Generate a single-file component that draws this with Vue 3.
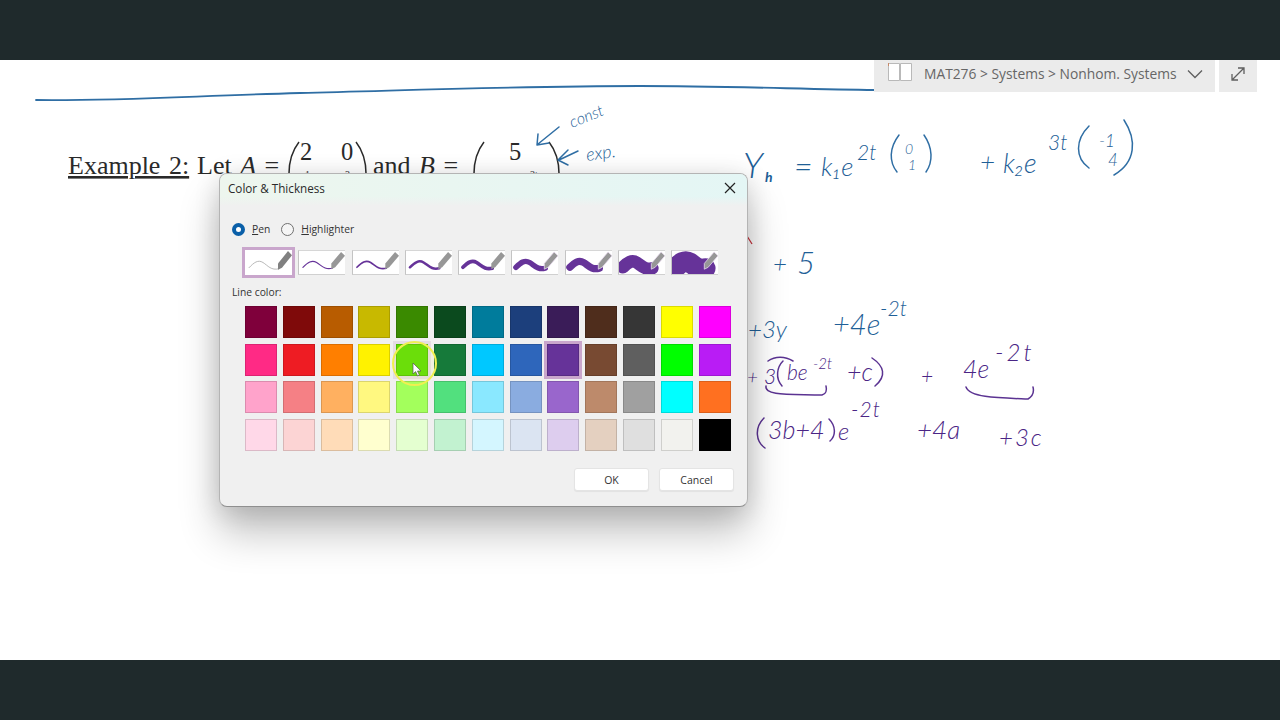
<template>
  <div class="screen">
    <div class="letterbox"></div>

    <main class="page">
      <svg class="ink" viewBox="0 60 1280 600" width="1280" height="600">
        <!-- printed problem statement -->
        <g class="print">
          <text x="68" y="174" text-decoration="underline">Example 2:</text>
          <text x="197" y="174">Let <tspan font-style="italic">A</tspan> =</text>
          <text class="print__cell" x="300" y="160">2</text>
          <text class="print__cell" x="341" y="160">0</text>
          <!-- second matrix row is almost all behind the dialog, only its tips show -->
          <text class="print__tip" x="305" y="178">1</text>
          <text class="print__tip" x="345" y="178">3</text>
          <text x="373" y="174">and <tspan font-style="italic">B</tspan> =</text>
          <text class="print__cell" x="509" y="160">5</text>
          <text class="print__tip" x="530" y="178">2t</text>
        </g>
        <path class="bracket" d="M299 142 Q288 156 289 178 M356 142 Q367 156 366 178 M484 142 Q473 156 474 178 M549 142 Q560 156 559 178" />

        <!-- long rule across the page -->
        <path class="stroke blue wide" d="M36 100 C120 101 190 96 300 93 C420 90 520 86 640 86 C720 86 800 89 875 90" />

        <!-- notes on the printed part -->
        <g class="hand blue">
          <text transform="translate(572 128) rotate(-22)" font-size="16">const</text>
          <text transform="translate(587 161) rotate(-8)" font-size="18">exp.</text>

          <text x="743" y="178" font-size="36">Y</text>
          <text x="765" y="182" font-size="14" font-weight="700">h</text>
          <text x="794" y="178" font-size="32">=</text>
          <text x="821" y="176" font-size="26">k₁e</text>
          <text x="857" y="160" font-size="21">2t</text>
          <text x="905" y="154" font-size="14">0</text>
          <text x="908" y="170" font-size="14">1</text>
          <text x="980" y="171" font-size="26">+</text>
          <text x="1003" y="173" font-size="27">k₂e</text>
          <text x="1048" y="150" font-size="21">3t</text>
          <text x="1099" y="147" font-size="17">-1</text>
          <text x="1108" y="166" font-size="17">4</text>
          <text x="773" y="272" font-size="24">+</text>
          <text x="797" y="274" font-size="31">5</text>
          <text x="748" y="338" font-size="24">+3y</text>
          <text x="833" y="335" font-size="29">+4e</text>
          <text x="880" y="316" font-size="21">-2t</text>
        </g>
        <g class="stroke blue">
          <path d="M559 127 L538 144 M538 134 L537 145 L549 143" />
          <path d="M578 151 L559 160 M568 150 L558 160 L568 165" />
          <path d="M899 135 C889 148 889 162 897 172 M924 135 C933 148 933 162 926 172" />
          <path d="M1089 126 C1075 140 1075 158 1089 168 M1124 120 C1137 140 1136 162 1114 175" />
        </g>
        <path class="red" d="M747 236 L752 244" />

        <!-- worked lines in purple -->
        <g class="hand purple">
          <text x="747" y="384" font-size="19">+</text>
          <text x="764" y="384" font-size="21">3</text>
          <text x="787" y="380" font-size="21">be</text>
          <text x="813" y="369" font-size="15">-2t</text>
          <text x="847" y="381" font-size="25">+c</text>
          <text x="921" y="384" font-size="21">+</text>
          <text x="963" y="378" font-size="25">4e</text>
          <text x="995" y="361" font-size="24" letter-spacing="3">-2t</text>
          <text x="768" y="439" font-size="25">3b+4</text>
          <text x="838" y="440" font-size="24">e</text>
          <text x="851" y="417" font-size="21" letter-spacing="1">-2t</text>
          <text x="917" y="439" font-size="26">+4a</text>
          <text x="999" y="446" font-size="24" letter-spacing="2">+3c</text>
        </g>
        <g class="stroke purple">
          <path d="M783 361 C777 367 775 378 782 386 M872 358 C884 366 887 376 875 386" />
          <path d="M768 361 C775 356 785 356 793 361" />
          <path d="M766 386 C764 396 790 394 822 395 C826 394 827 390 826 386" />
          <path d="M966 387 C970 398 1000 398 1028 399 C1033 396 1034 391 1033 387" />
          <path d="M764 418 C754 428 756 442 765 448 M829 419 C836 426 836 436 830 441" />
        </g>
      </svg>

      <nav class="notebook-bar">
        <div class="crumbs">
          <svg class="book" viewBox="0 0 26 20" width="26" height="20">
            <path d="M1.5 1.5 H12.5 V18.5 H1.5 Z" fill="#fff" stroke="#b9b9b9" />
            <path d="M13.5 1.5 H24.5 V18.5 H13.5 Z" fill="#fff" stroke="#b9b9b9" />
            <path d="M1.5 1 V4" stroke="#c98b6a" />
          </svg>
          <span class="crumbs__text">MAT276 &gt; Systems &gt; Nonhom. Systems</span>
          <svg viewBox="0 0 16 10" width="16" height="10">
            <path d="M1 1.5 L8 8.5 L15 1.5" fill="none" stroke="#5f5f5f" stroke-width="1.3" />
          </svg>
        </div>
        <button class="expand">
          <svg viewBox="0 0 16 16" width="16" height="16">
            <path d="M2 14 L14 2 M8 2 H14 V8 M2 8 V14 H8" fill="none" stroke="#5f5f5f" stroke-width="1.3" />
          </svg>
        </button>
      </nav>

      <section class="dialog">
        <header class="dialog__header">
          <h2 class="dialog__title">Color &amp; Thickness</h2>
          <svg class="dialog__close" viewBox="0 0 12 12" width="12" height="12">
            <path d="M1 1 L11 11 M11 1 L1 11" stroke="#222" stroke-width="1.2" />
          </svg>
        </header>

        <div class="dialog__body">
          <div class="modes">
            <span class="radio radio--on"></span>
            <span class="modes__label"><u>P</u>en</span>
            <span class="radio"></span>
            <span class="modes__label"><u>H</u>ighlighter</span>
          </div>

          <div class="thickness">
            <div
              v-for="(w, i) in widths"
              :key="i"
              class="thumb"
              :class="{ 'thumb--selected': i === 0 }"
            >
              <svg viewBox="0 0 47 24" width="100%" height="100%" preserveAspectRatio="none">
                <path
                  d="M4 17 C9 12 13 9 18 12 S26 20 34 18"
                  fill="none"
                  stroke-linecap="round"
                  :stroke="i === 0 ? '#a9a9a9' : '#663399'"
                  :stroke-width="w"
                />
                <path
                  d="M43 1 L47 5 L37 17 L33 19 L33 13 Z"
                  :fill="i === 0 ? '#808080' : '#979797'"
                  :stroke="i > 4 ? '#e9dcf0' : 'none'"
                  stroke-width="0.8"
                />
              </svg>
            </div>
          </div>

          <div class="section-label">Line color:</div>

          <div class="palette">
            <div
              v-for="(c, i) in colors"
              :key="i"
              class="swatch"
              :class="{ 'swatch--selected': c === selected, 'swatch--hover': c === hovered }"
              :style="{ background: c }"
            >
              <template v-if="c === hovered">
                <span class="pointer-ring"></span>
                <svg class="pointer" viewBox="0 0 10 15" width="10" height="15">
                  <path d="M1 1 V12 L3.6 9.6 L5.6 14 L7.4 13 L5.5 9 H9 Z" fill="#fff" stroke="#555" stroke-width="0.7" />
                </svg>
              </template>
            </div>
          </div>

          <footer class="actions">
            <button class="btn">OK</button>
            <button class="btn">Cancel</button>
          </footer>
        </div>
      </section>
    </main>

    <div class="letterbox"></div>
  </div>
</template>

<script setup>
const widths = [0.8, 1.2, 1.7, 2.6, 3.8, 5.6, 7.5, 13, 21]

const selected = '#663399'
const hovered = '#5cdc00'

const colors = [
  '#7f003b', '#7f0a0a', '#b85c00', '#c8b900', '#3a8a00', '#0b4a1e', '#007c9c', '#1c3f7c', '#3a1c58', '#4f2d1c', '#363636', '#ffff00', '#ff00ff',
  '#ff2a85', '#ee1c23', '#ff7f00', '#fff200', '#5cdc00', '#167a3a', '#00c8ff', '#2e66bb', '#663399', '#784a32', '#5f5f5f', '#00ff00', '#b91cf5',
  '#ffa3cb', '#f58085', '#ffb060', '#fff880', '#a3ff5c', '#52e07e', '#8ae8ff', '#8aace0', '#9966cc', '#bd8a6b', '#a0a0a0', '#00ffff', '#ff7020',
  '#ffd8e8', '#fcd4d4', '#ffdcb8', '#ffffcf', '#e4ffd0', '#c2f2d0', '#d4f6ff', '#dbe4f2', '#ddcdee', '#e4d0c0', '#dfdfdf', '#f2f2ee', '#000000'
]
</script>

<style>
html,
body {
  margin: 0;
  background: #fff;
}
</style>

<style scoped>
.screen {
  width: 1280px;
  height: 720px;
  display: flex;
  flex-direction: column;
  overflow: hidden;
  font-family: "Open Sans", "Noto Sans", sans-serif;
}

.letterbox {
  height: 60px;
  flex: none;
  background: #1f2a2c;
}

.page {
  position: relative;
  flex: 1;
  background: #fff;
  overflow: hidden;
}

/* Ink and print sit on a free canvas, in screen coordinates */
.ink {
  position: absolute;
  inset: 0;
}

.print {
  font-family: "Liberation Serif", serif;
  font-size: 26px;
  word-spacing: 2px;
  fill: #2a2a2a;
}

.print__cell {
  font-size: 24.5px;
}

.print__tip {
  font-size: 10px;
}

.bracket {
  fill: none;
  stroke: #2a2a2a;
  stroke-width: 1.5;
}

.hand {
  font-family: Lato, "Open Sans", sans-serif;
  font-weight: 300;
  font-style: italic;
}

.hand.blue {
  fill: #1f5f97;
}

.hand.purple {
  fill: #4a2585;
}

.stroke {
  fill: none;
  stroke-width: 1.5;
  stroke-linecap: round;
  stroke-linejoin: round;
}

.stroke.blue {
  stroke: #2f6ea4;
}

.stroke.purple {
  stroke: #5b3392;
}

.stroke.wide {
  stroke-width: 1.8;
}

.red {
  stroke: #c8303a;
  stroke-width: 1.3;
  fill: none;
}

/* OneNote bar, top right */
.notebook-bar {
  position: absolute;
  top: 0;
  right: 23px;
  display: flex;
  gap: 4px;
}

.crumbs {
  width: 341px;
  height: 32px;
  box-sizing: border-box;
  padding: 0 12px 5px 13px;
  display: flex;
  align-items: center;
  background: #ebebeb;
}

.book {
  margin-right: 11px;
  margin-top: -4px;
}

.crumbs__text {
  flex: 1;
  font-size: 13.8px;
  color: #666;
  white-space: nowrap;
}

.expand {
  width: 38px;
  height: 32px;
  padding: 0 0 5px;
  border: 0;
  background: #ebebeb;
  display: flex;
  align-items: center;
  justify-content: center;
}

/* Dialog floats over the page like a desktop window */
.dialog {
  position: absolute;
  left: 219px;
  top: 113px;
  width: 529px;
  height: 334px;
  box-sizing: border-box;
  display: flex;
  flex-direction: column;
  background: #f0f0f0;
  border: 1px solid #b4b4b4;
  border-bottom-color: #8f8f8f;
  border-radius: 8px;
  box-shadow:
    0 26px 40px rgba(0, 0, 0, 0.24),
    0 4px 26px rgba(0, 0, 0, 0.14);
}

.dialog__header {
  height: 32px;
  flex: none;
  box-sizing: border-box;
  padding: 0 11px 5px 8px;
  display: flex;
  align-items: center;
  justify-content: space-between;
  border-radius: 7px 7px 0 0;
  background:
    linear-gradient(to bottom, rgba(240, 240, 240, 0) 70%, #f0f0f0),
    linear-gradient(to right, #edf6ee, #e4f6f5);
}

.dialog__title {
  margin: 0;
  font-size: 11.7px;
  font-weight: 400;
  color: #2a2a2a;
}

.dialog__body {
  flex: 1;
  min-height: 0;
  display: flex;
  flex-direction: column;
  padding: 16px 13px 15px 12px;
}

.modes {
  display: flex;
  align-items: center;
  height: 14px;
}

.radio {
  width: 13px;
  height: 13px;
  box-sizing: border-box;
  border-radius: 50%;
  border: 1px solid #707070;
  background: #f5f5f5;
}

.radio--on {
  border: 4px solid #0a5fa8;
  background: #fff;
}

.modes__label {
  margin-left: 7px;
  margin-right: 11px;
  font-size: 10.3px;
  color: #333;
}

.thickness {
  margin: 14px 0 0 13px;
  display: flex;
  gap: 6.3px;
}

.thumb {
  width: 47px;
  height: 25px;
  box-sizing: border-box;
  overflow: hidden;
  background: #fff;
  border-left: 1px solid #c4c4c4;
  border-top: 1px solid #d6d6d6;
  border-bottom: 1px solid #d0d0d0;
}

.thumb--selected {
  border: 0;
  outline: 3px solid #c9a6cc;
  outline-offset: 0;
}

.section-label {
  margin-top: 10px;
  font-size: 10.3px;
  color: #333;
  line-height: 14px;
}

.palette {
  margin: 7px 0 0 13px;
  display: grid;
  grid-template-columns: repeat(13, 32px);
  grid-auto-rows: 32px;
  column-gap: 5.8px;
  row-gap: 5.7px;
}

.swatch {
  position: relative;
  box-sizing: border-box;
  border: 1px solid rgba(0, 0, 0, 0.14);
}

.swatch--selected {
  box-shadow: 0 0 0 3px #c9a6cc;
}

.swatch--hover {
  z-index: 1;
  box-shadow: 0 0 0 3px #e4dde4;
}

.pointer-ring {
  position: absolute;
  left: -5px;
  top: -4px;
  width: 45px;
  height: 45px;
  box-sizing: border-box;
  border-radius: 50%;
  border: 2.5px solid #f0f050;
  background: rgba(250, 250, 100, 0.1);
}

.pointer {
  position: absolute;
  left: 15px;
  top: 17px;
}

.actions {
  margin-top: auto;
  display: flex;
  justify-content: flex-end;
  gap: 10px;
}

.btn {
  width: 75px;
  height: 23px;
  padding: 0;
  border: 1px solid #e4e4e4;
  border-radius: 3px;
  background: #fff;
  font-family: inherit;
  font-size: 10.5px;
  color: #333;
  box-shadow: 0 1px 1px rgba(0, 0, 0, 0.06);
}
</style>
